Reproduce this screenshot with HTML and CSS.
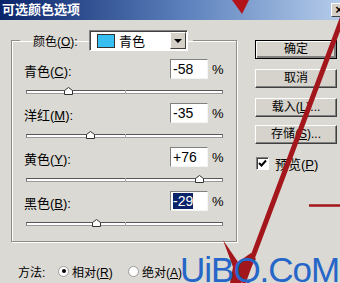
FILE: index.html
```html
<!DOCTYPE html>
<html>
<head lang="zh">
    <meta charset="UTF-8">
    <title>可选颜色选项</title>
    <link rel="stylesheet" href="styles.css">
</head>
<body>
<div id="dialog">
    <div class="titlebar">
        <span class="title">可选颜色选项</span>
        <span class="close">×</span>
    </div>
    <div class="body">
        <div class="main">
            <fieldset class="group">
                <legend class="legend">
                    <span class="legend-label">颜色(<u>O</u>):</span>
                    <div class="select">
                        <span class="swatch"></span>
                        <span class="select-text">青色</span>
                        <span class="select-btn"><span class="arrow"></span></span>
                    </div>
                </legend>
                <div class="field">
                    <div class="field-row">
                        <span class="field-label">青色(<u>C</u>):</span>
                        <span class="num-box">-58</span>
                        <span class="pct">%</span>
                    </div>
                    <div class="track">
                        <span class="thumb" style="left: 21%"><svg width="9" height="8"><path d="M0.5 7.5V3.5L4.5 0.5L8.5 3.5V7.5Z" fill="#fff" stroke="#333"/></svg></span>
                    </div>
                </div>
                <div class="field">
                    <div class="field-row">
                        <span class="field-label">洋红(<u>M</u>):</span>
                        <span class="num-box">-35</span>
                        <span class="pct">%</span>
                    </div>
                    <div class="track">
                        <span class="thumb" style="left: 32.5%"><svg width="9" height="8"><path d="M0.5 7.5V3.5L4.5 0.5L8.5 3.5V7.5Z" fill="#fff" stroke="#333"/></svg></span>
                    </div>
                </div>
                <div class="field">
                    <div class="field-row">
                        <span class="field-label">黄色(<u>Y</u>):</span>
                        <span class="num-box">+76</span>
                        <span class="pct">%</span>
                    </div>
                    <div class="track">
                        <span class="thumb" style="left: 88%"><svg width="9" height="8"><path d="M0.5 7.5V3.5L4.5 0.5L8.5 3.5V7.5Z" fill="#fff" stroke="#333"/></svg></span>
                    </div>
                </div>
                <div class="field">
                    <div class="field-row">
                        <span class="field-label">黑色(<u>B</u>):</span>
                        <span class="num-box"><span class="sel">-29</span></span>
                        <span class="pct">%</span>
                    </div>
                    <div class="track">
                        <span class="thumb" style="left: 35.5%"><svg width="9" height="8"><path d="M0.5 7.5V3.5L4.5 0.5L8.5 3.5V7.5Z" fill="#fff" stroke="#333"/></svg></span>
                    </div>
                </div>
            </fieldset>
            <div class="method">
                <span class="method-label">方法:</span>
                <span class="radio on"></span>
                <span class="radio-text">相对(<u>R</u>)</span>
                <span class="radio"></span>
                <span class="radio-text">绝对(<u>A</u>)</span>
            </div>
        </div>
        <div class="buttons">
            <div class="btn default">确定</div>
            <div class="btn">取消</div>
            <div class="btn gap">载入(<u>L</u>)...</div>
            <div class="btn">存储(<u>S</u>)...</div>
            <div class="check-row">
                <span class="checkbox"><svg width="9" height="9"><path d="M1 4L3.5 6.5L8 1.5" fill="none" stroke="#000" stroke-width="2"/></svg></span>
                <span class="check-text">预览(<u>P</u>)</span>
            </div>
        </div>
    </div>
</div>
<svg class="marks" width="340" height="283">
    <line x1="349" y1="0" x2="243" y2="283" stroke="#a3161b" stroke-width="5"/>
    <polygon points="223,240 238,262 251,253 256,259 241,283 230,283 233,267" fill="#a3161b"/>
    <polygon points="232,0 249,0 242,14" fill="#b3141a"/>
    <line x1="309" y1="205.5" x2="340" y2="205.5" stroke="#a3161b" stroke-width="2.5"/>
</svg>
<div class="watermark">UiBQ.CoM</div>
</body>
</html>
```

FILE: styles.css
```css
* {
    margin: 0;
    padding: 0;
    box-sizing: border-box;
}

body {
    width: 340px;
    height: 283px;
    overflow: hidden;
    position: relative;
    background-color: #dbd9d3;
    font: 12px "Liberation Sans", "Noto Sans CJK SC", sans-serif;
    color: #000;
}

u {
    text-decoration: underline;
}

.titlebar {
    height: 20px;
    display: flex;
    align-items: center;
    justify-content: space-between;
    padding-left: 2px;
    background: linear-gradient(to right, #0a246a, #5d82bd 55%, #b4cbea);
}

.title {
    color: #fff;
    font-weight: bold;
    font-size: 13px;
    line-height: 20px;
}

.close {
    width: 16px;
    height: 14px;
    margin-right: -7px;
    background-color: #d4d0c8;
    border: 1px solid;
    border-color: #fff #404040 #404040 #fff;
    font-size: 13px;
    font-weight: bold;
    line-height: 11px;
    text-align: center;
}

.body {
    display: flex;
    padding-left: 11px;
}

.main {
    width: 226px;
}

/* group box */
.group {
    width: 226px;
    margin-top: 10px;
    padding: 0 12px 6px 12px;
    border: 1px solid #8e8c87;
    box-shadow: inset 1px 1px 0 #fff, 1px 1px 0 #fff;
}

.legend {
    display: flex;
    align-items: center;
    margin-left: -4px;
    padding: 0 5px 0 13px;
}

.legend-label {
    width: 56px;
}

.select {
    width: 99px;
    height: 21px;
    display: flex;
    align-items: center;
    background-color: #fff;
    border: 1px solid;
    border-color: #808080 #fff #fff #808080;
    box-shadow: inset 1px 1px 0 #404040;
    padding-left: 7px;
}

.swatch {
    width: 18px;
    height: 14px;
    background-color: #36bff0;
    border: 1px solid #333;
}

.select-text {
    margin-left: 4px;
    flex: 1;
    font-size: 13px;
}

.select-btn {
    width: 16px;
    height: 17px;
    margin-right: 1px;
    background-color: #d4d0c8;
    border: 1px solid;
    border-color: #fff #404040 #404040 #fff;
    display: flex;
    align-items: center;
    justify-content: center;
}

.arrow {
    width: 0;
    height: 0;
    border-left: 4px solid transparent;
    border-right: 4px solid transparent;
    border-top: 4px solid #000;
}

.field:first-of-type {
    margin-top: 8px;
}

.field-row {
    height: 20px;
    display: flex;
    align-items: center;
}

.field-label {
    flex: 1;
    font-size: 13px;
    padding-top: 3px;
}

.num-box {
    width: 38px;
    height: 20px;
    background-color: #fff;
    border: 1px solid;
    border-color: #808080 #f4f4f4 #f4f4f4 #808080;
    padding-left: 2px;
    font-size: 14px;
    line-height: 18px;
}

.sel {
    background-color: #0a246a;
    color: #fff;
}

.pct {
    width: 12px;
    margin-left: 4px;
    font-size: 13px;
}

.track {
    position: relative;
    height: 4px;
    margin: 11px 1px 9px 2px;
    background-color: #fff;
    border: 1px solid;
    border-color: #555 #777 #999 #777;
}

.track::after {
    content: "";
    position: absolute;
    left: 50%;
    top: -1px;
    width: 1px;
    height: 4px;
    background-color: #aaa;
}

.thumb {
    position: absolute;
    top: -4px;
    width: 9px;
    height: 8px;
    margin-left: -4px;
    z-index: 1;
}

.thumb svg {
    display: block;
}

/* method */
.method {
    display: flex;
    align-items: center;
    height: 16px;
    margin-top: 21px;
    padding-left: 7px;
}

.method-label {
    width: 40px;
}

.radio {
    width: 11px;
    height: 11px;
    border-radius: 50%;
    background-color: #fff;
    border: 1px solid #9a9a9a;
    display: flex;
    align-items: center;
    justify-content: center;
}

.radio.on::after {
    content: "";
    width: 4px;
    height: 4px;
    border-radius: 50%;
    background-color: #000;
}

.radio-text {
    margin-left: 3px;
    width: 56px;
}

/* buttons */
.buttons {
    margin-left: 18px;
    margin-top: 20px;
    width: 82px;
}

.btn {
    height: 19px;
    margin-bottom: 10px;
    background-color: #d6d3cd;
    border: 1px solid;
    border-color: #fff #404040 #404040 #fff;
    box-shadow: inset -1px -1px 0 #808080;
    text-align: center;
    line-height: 17px;
}

.btn.default {
    border: 1px solid #000;
    box-shadow: inset 1px 1px 0 #fff, inset -2px -2px 0 #808080;
}

.btn.gap {
    margin-top: 7px;
    margin-bottom: 8px;
}

.check-row {
    display: flex;
    align-items: center;
    margin-top: 2px;
    padding-left: 1px;
}

.checkbox {
    width: 13px;
    height: 13px;
    background-color: #fff;
    border: 1px solid;
    border-color: #808080 #fff #fff #808080;
    box-shadow: inset 1px 1px 0 #404040;
    display: flex;
    align-items: center;
    justify-content: center;
}

.checkbox svg {
    display: block;
}

.check-text {
    margin-left: 6px;
    font-size: 13px;
}

/* overlay marks */
.marks {
    position: absolute;
    left: 0;
    top: 0;
    pointer-events: none;
}

.watermark {
    position: absolute;
    left: 180px;
    top: 252px;
    font: 35px "Liberation Sans", sans-serif;
    line-height: 35px;
    letter-spacing: -1px;
    color: #2566c8;
}
```
